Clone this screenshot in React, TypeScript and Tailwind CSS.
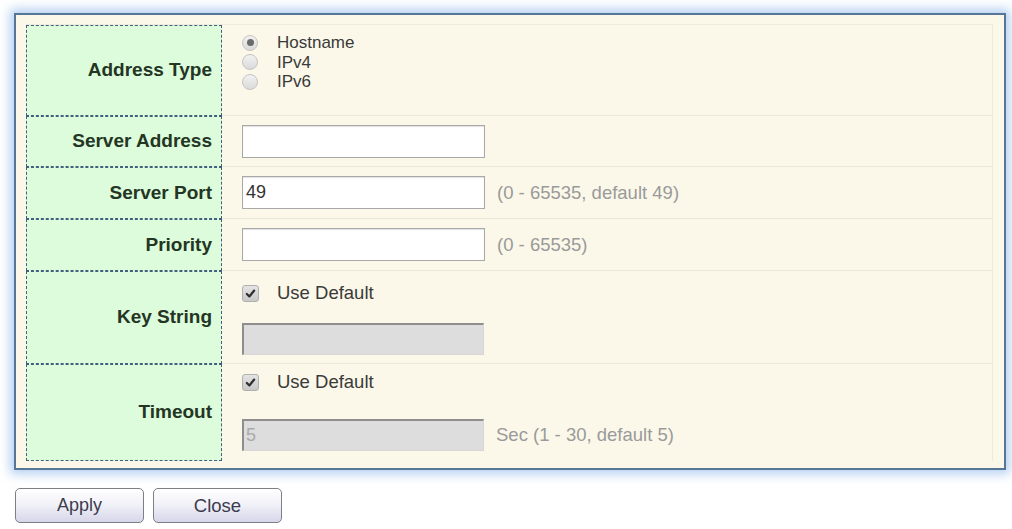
import React from "react";

const font = { fontFamily: '"Liberation Sans", Arial, sans-serif' };

function Label({ text, h }: { text: string; h: string }) {
  return (
    <div
      className={`${h} flex items-center justify-end pr-[9px] bg-[#dcfcdb] border border-dashed border-[#41607e] text-[19px] font-bold text-[#243524]`}
    >
      {text}
    </div>
  );
}

function Radio({ checked }: { checked?: boolean }) {
  return (
    <span className="w-[16px] h-[16px] rounded-full border border-[#c4c4c4] bg-gradient-to-b from-[#f2f2f2] to-[#dadada] flex items-center justify-center mr-[19px] shrink-0">
      {checked && <span className="w-[7px] h-[7px] rounded-full bg-[#6a6a6a]" />}
    </span>
  );
}

function Check() {
  return (
    <span className="w-[17px] h-[17px] rounded-[3px] border border-[#b0b0b0] bg-gradient-to-b from-[#e4e4e4] to-[#c8c8c8] flex items-center justify-center mr-[18px] shrink-0">
      <svg width="11" height="11" viewBox="0 0 12 12">
        <path d="M2 6.5 L4.8 9.2 L10 2.8" fill="none" stroke="#2e2e2e" strokeWidth="2.4" strokeLinecap="round" strokeLinejoin="round" />
      </svg>
    </span>
  );
}

function TextInput({ value }: { value?: string }) {
  return (
    <div className="w-[243px] h-[33px] bg-white border border-[#a8a8a8] shadow-[inset_0_1px_1px_rgba(0,0,0,0.12)] flex items-center pl-[3px] text-[18px] text-[#333]">
      {value}
    </div>
  );
}

function DisabledInput({ value }: { value?: string }) {
  return (
    <div className="w-[242px] h-[32px] bg-[#dddddd] border-t-2 border-l-2 border-[#8e8e8e] border-r border-b border-r-[#d6d6d6] border-b-[#d6d6d6] flex items-center pl-[2px] text-[18px] text-[#aaaaaa]">
      {value}
    </div>
  );
}

function Hint({ text }: { text: string }) {
  return <span className="ml-[12px] text-[18.5px] text-[#9a9a9a]">{text}</span>;
}

export default function App() {
  const cell = "border-b border-[#ebe7d6] pl-[20px]";
  return (
    <div className="w-[1012px] h-[529px] bg-white pt-[13px] pl-[14px] overflow-hidden" style={font}>
      <div className="w-[992px] h-[457px] border-2 border-[#557697] bg-[#fbf8e9] shadow-[0_0_10px_4px_rgba(120,170,230,0.55)] pt-[9px] pl-[10px] pr-[11px]">
        <div className="grid grid-cols-[196px_1fr] border-r border-t border-[#efebdc]">
          <Label text="Address Type" h="h-[91px]" />
          <div className={`${cell} pt-[8px] text-[17px] text-[#3a3a3a] leading-[19.5px] pl-[19px]`}>
            <div className="flex items-center h-[19.5px]">
              <Radio checked />
              Hostname
            </div>
            <div className="flex items-center h-[19.5px]">
              <Radio />
              IPv4
            </div>
            <div className="flex items-center h-[19.5px]">
              <Radio />
              IPv6
            </div>
          </div>

          <Label text="Server Address" h="h-[51px]" />
          <div className={`${cell} flex items-center`}>
            <TextInput />
          </div>

          <Label text="Server Port" h="h-[52px]" />
          <div className={`${cell} flex items-center`}>
            <TextInput value="49" />
            <Hint text="(0 - 65535, default 49)" />
          </div>

          <Label text="Priority" h="h-[52px]" />
          <div className={`${cell} flex items-center`}>
            <TextInput />
            <Hint text="(0 - 65535)" />
          </div>

          <Label text="Key String" h="h-[93px]" />
          <div className={`${cell} pt-[12px]`}>
            <div className="flex items-center h-[20px] text-[18.5px] text-[#3a3a3a]">
              <Check />
              Use Default
            </div>
            <div className="mt-[20px]">
              <DisabledInput />
            </div>
          </div>

          <Label text="Timeout" h="h-[97px]" />
          <div className="pl-[20px] pt-[8px]">
            <div className="flex items-center h-[20px] text-[18.5px] text-[#3a3a3a]">
              <Check />
              Use Default
            </div>
            <div className="mt-[27px] flex items-center">
              <DisabledInput value="5" />
              <Hint text="Sec (1 - 30, default 5)" />
            </div>
          </div>
        </div>
      </div>

      <div className="mt-[18px] flex gap-[9px] pl-[1px]">
        <button className="w-[129px] h-[35px] rounded-[5px] border border-[#7e7e84] bg-gradient-to-b from-[#ffffff] via-[#f0f0f8] to-[#d6d6ea] text-[18px] text-[#3c3c4c]">
          Apply
        </button>
        <button className="w-[129px] h-[35px] rounded-[5px] border border-[#7e7e84] bg-gradient-to-b from-[#ffffff] via-[#f0f0f8] to-[#d6d6ea] text-[18.5px] text-[#3c3c4c]">
          Close
        </button>
      </div>
    </div>
  );
}
